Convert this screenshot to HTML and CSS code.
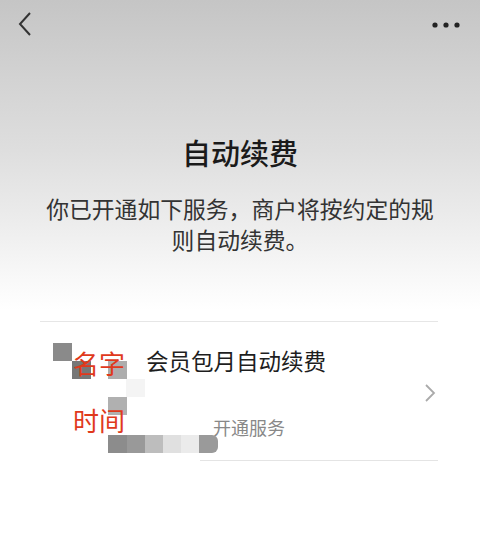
FILE: index.html
```html
<!DOCTYPE html>
<html lang="zh">
<head>
<meta charset="utf-8">
<link rel="stylesheet" href="styles.css">
</head>
<body>
<div class="page">
  <div class="topbar">
    <svg class="back" width="20" height="28" viewBox="0 0 20 28"><path d="M14 3 L4 14 L14 25" fill="none" stroke="#333" stroke-width="2"/></svg>
    <svg class="more" width="28" height="8" viewBox="0 0 28 8"><circle cx="3" cy="4" r="2.6" fill="#222"/><circle cx="14" cy="4" r="2.6" fill="#222"/><circle cx="25" cy="4" r="2.6" fill="#222"/></svg>
  </div>
  <div class="hero">
    <h1 class="title">自动续费</h1>
    <p class="desc">你已开通如下服务，商户将按约定的规则自动续费。</p>
  </div>
  <div class="list">
    <div class="item">
      <div class="item-main">
        <div class="item-name">会员包月自动续费</div>
        <div class="item-sub">开通服务</div>
      </div>
      <svg class="chev" width="12" height="20" viewBox="0 0 12 20"><path d="M2 2 L10 10 L2 18" fill="none" stroke="#aaa" stroke-width="1.8"/></svg>
      <div class="mosaic">
        <i class="m1"></i><i class="m2"></i><i class="m3"></i><i class="m4"></i><i class="m5"></i>
        <i class="b1"></i><i class="b2"></i><i class="b3"></i><i class="b4"></i><i class="b5"></i><i class="b6"></i>
      </div>
      <span class="note n1">名字</span>
      <span class="note n2">时间</span>
    </div>
  </div>
</div>
</body>
</html>
```
FILE: styles.css
```css
html, body { margin: 0; padding: 0; }
body {
  font-family: "Noto Sans CJK SC", "Noto Sans", sans-serif;
  background: #fff;
}
.page {
  width: 480px;
  height: 533px;
  background: linear-gradient(#c5c5c5 0px, #d3d3d3 80px, #dedede 150px, #ececec 220px, #fafafa 285px, #fff 310px);
  overflow: hidden;
  position: relative;
}
.topbar {
  height: 48px;
  display: flex;
  justify-content: space-between;
  align-items: center;
  padding: 0 20px 0 16px;
}
.more { margin-top: 2px; }
.hero {
  padding-top: 84px;
  text-align: center;
}
.title {
  margin: 0;
  font-size: 29px;
  font-weight: 500;
  color: #1a1a1a;
  line-height: 40px;
}
.desc {
  margin: 21px auto 0;
  width: 396px;
  font-size: 22.8px;
  line-height: 31px;
  color: #333;
  text-align: center;
}
.list {
  margin: 66px 42px 0 40px;
  border-top: 1px solid #e6e6e6;
}
.item {
  position: relative;
  height: 139px;
  display: flex;
  align-items: center;
}
.item::after {
  content: "";
  position: absolute;
  left: 160px;
  right: 0;
  bottom: 0;
  border-bottom: 1px solid #e4e4e4;
}
.item-main {
  flex: 1;
  align-self: stretch;
  padding-left: 106px;
}
.item-name {
  margin-top: 22px;
  font-size: 22.5px;
  line-height: 32px;
  color: #1e1e1e;
}
.item-sub {
  margin-top: 38px;
  padding-left: 67px;
  font-size: 18px;
  line-height: 26px;
  color: #888;
}
.chev { margin-right: 2px; margin-top: 2px; }
.mosaic i { position: absolute; display: block; width: 19px; height: 18px; }
.m1 { left: 13px; top: 21px; background: #8a8a8a; }
.m2 { left: 32px; top: 39px; background: #777; }
.m3 { left: 68px; top: 39px; background: #adadad; }
.m4 { left: 68px; top: 75px; background: #b0b0b0; }
.m5 { left: 86px; top: 57px; width: 18px; height: 56px; background: #f4f4f4; }
.b1 { left: 68px; top: 113px; background: #8c8c8c; }
.b2 { left: 87px; top: 113px; background: #999; }
.b3 { left: 105px; top: 113px; background: #bdbdbd; }
.b4 { left: 123px; top: 113px; background: #e0e0e0; }
.b5 { left: 141px; top: 113px; background: #ebebeb; }
.b6 { left: 159px; top: 113px; width: 13px; background: #9a9a9a; border-radius: 0 6px 6px 0; }
.note {
  position: absolute;
  left: 33px;
  font-size: 26px;
  line-height: 30px;
  color: #e0391c;
}
.n1 { top: 26px; }
.n2 { top: 83px; }
```
